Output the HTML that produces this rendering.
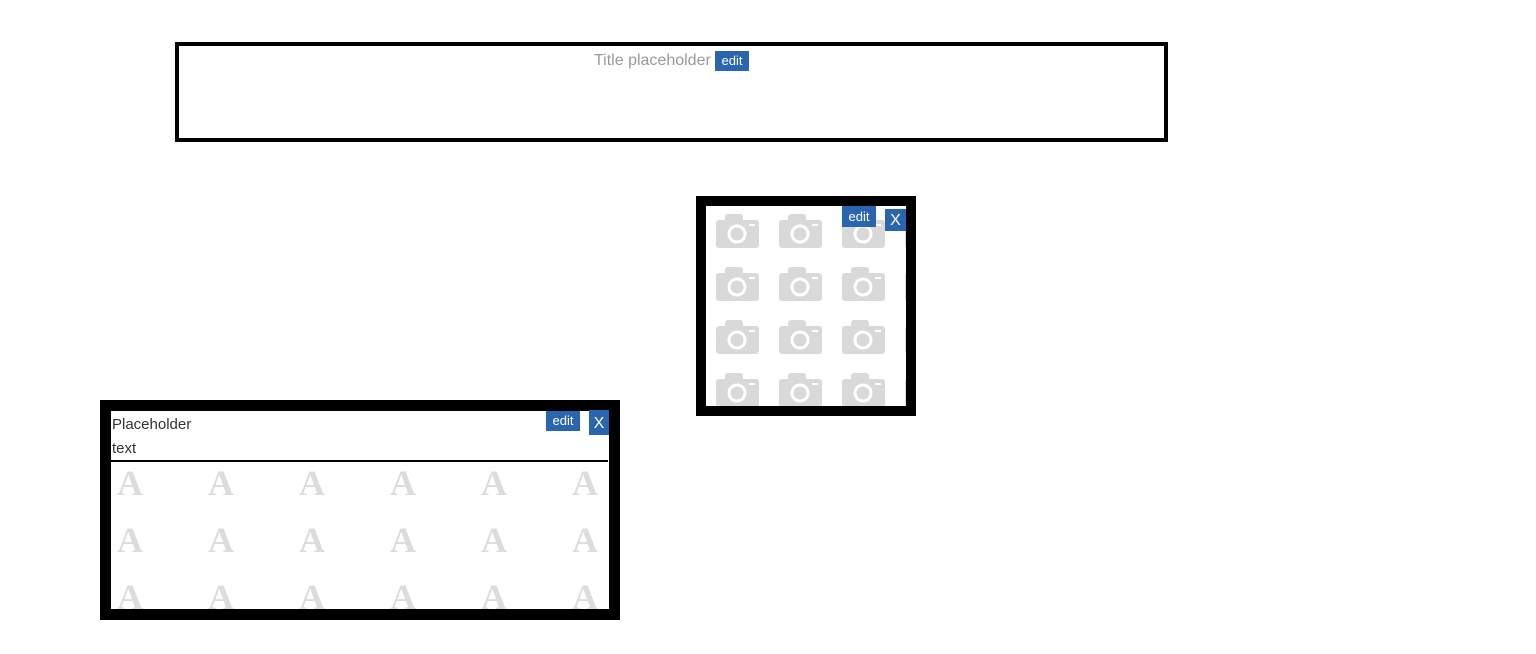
<!DOCTYPE html>
<html><head><style>
body{margin:0;width:1536px;height:654px;background:#fff;position:relative;overflow:hidden;font-family:"Liberation Sans",sans-serif}
.abs{position:absolute;box-sizing:border-box}
.btn{position:absolute;background:#2a66b0;color:#fff;font-size:13px;text-align:center}
</style></head><body>
<div class="abs" style="left:175px;top:42px;width:993px;height:100px;border:4px solid #000"></div>
<div class="abs" style="left:594px;top:51px;color:#999;font-size:16px;line-height:20px">Title placeholder</div>
<div class="btn" style="left:715px;top:51px;width:34px;height:20px;line-height:20px">edit</div>

<div class="abs" style="left:696px;top:196px;width:220px;height:220px;border:10px solid #000;overflow:hidden">
<svg width="200" height="200" style="position:absolute;left:0;top:0">
<defs>
<pattern id="cam" x="10" y="8" width="63" height="53" patternUnits="userSpaceOnUse">
<rect x="0" y="6" width="43" height="28" rx="3" fill="#d9d9d9"/>
<rect x="9" y="0" width="18" height="8" rx="3" fill="#d9d9d9"/>
<circle cx="21" cy="20" r="8" fill="none" stroke="#fff" stroke-width="3"/>
<rect x="33" y="10" width="6" height="2" fill="#fff"/>
</pattern></defs>
<rect width="200" height="200" fill="url(#cam)"/>
</svg>
</div>
<div class="btn" style="left:842px;top:206px;width:34px;height:21px;line-height:21px">edit</div>
<div class="btn" style="left:885px;top:209px;width:21px;height:22px;line-height:24px;font-size:16px">X</div>

<div class="abs" style="left:100px;top:400px;width:520px;height:220px;border:11px solid #000;overflow:hidden">
<div style="position:absolute;left:0;top:0;width:497px;height:51px;border-bottom:2px solid #000;box-sizing:border-box;font-size:15px;line-height:24px;color:#333;padding-left:1px;padding-top:2px">Placeholder<br>text</div>
<svg width="498" height="160" style="position:absolute;left:0;top:51px">
<defs><pattern id="aa" x="5" y="0" width="91" height="57" patternUnits="userSpaceOnUse">
<text x="1" y="33" font-family="Liberation Serif" font-weight="bold" font-size="36" fill="#dcdcdc">A</text></pattern></defs>
<rect width="498" height="160" fill="url(#aa)"/>
</svg>
</div>
<div class="btn" style="left:546px;top:411px;width:34px;height:20px;line-height:20px">edit</div>
<div class="btn" style="left:589px;top:410px;width:20px;height:25px;line-height:28px;font-size:16px">X</div>
</body></html>
